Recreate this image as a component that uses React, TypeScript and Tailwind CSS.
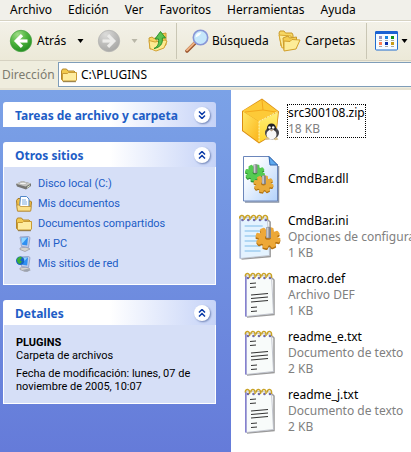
import type { ReactNode } from 'react';

const menus = ['Archivo', 'Edición', 'Ver', 'Favoritos', 'Herramientas', 'Ayuda'];

function Caret({ muted = false }: { muted?: boolean }) {
  return (
    <svg width="7" height="4" viewBox="0 0 7 4" className="shrink-0" aria-hidden="true">
      <path d="M0.5 0h6L3.5 4z" fill={muted ? '#b9b7a8' : '#000'} />
    </svg>
  );
}

function RoundArrow({ forward = false }: { forward?: boolean }) {
  const id = forward ? 'roundGrey' : 'roundGreen';
  return (
    <svg width="24" height="24" viewBox="0 0 24 24" className="shrink-0" aria-hidden="true">
      <defs>
        <radialGradient id={id} cx="0.35" cy="0.2" r="0.85">
          <stop offset="0" stopColor={forward ? '#dcdcda' : '#9fdc86'} />
          <stop offset="0.5" stopColor={forward ? '#bfbfbd' : '#4fb53f'} />
          <stop offset="1" stopColor={forward ? '#a6a6a4' : '#1e8a1f'} />
        </radialGradient>
      </defs>
      <circle cx="12" cy="12" r="10.7" fill={`url(#${id})`} stroke={forward ? '#b5b5b2' : '#4ba345'} strokeWidth="0.8" />
      <g transform={forward ? 'translate(24 0) scale(-1 1)' : undefined} fill="none" stroke={forward ? '#ececea' : '#fff'} strokeWidth="3.200">
        <path d="M13 6.200L7.200 12l5.800 5.800" />
        <path d="M7.500 12H18.500" />
      </g>
    </svg>
  );
}

function UpFolder() {
  return (
    <svg width="20" height="22" viewBox="0 0 20 22" className="shrink-0" aria-hidden="true">
      <path d="M1 8l3-1 2 1.500 3-1V17l-7 2z" fill="#f7d662" stroke="#c99b2e" />
      <path d="M13 4l5-1v12l-6 4z" fill="#f5cf55" stroke="#c89830" />
      <path d="M1 10.500l6 1.500L17 10l2 1-3 7-8 3-6-2.500z" fill="#fdea91" stroke="#d2a233" />
      <path d="M6 18.500c4-2 5-5 4.500-9.500H7L12.500 1.500 17.500 8h-3.200c.7 6-2.300 9.500-8.300 10.500z" fill="#5bc152" stroke="#1f8a26" strokeWidth="0.900" />
    </svg>
  );
}

function Magnifier() {
  return (
    <svg width="24" height="24" viewBox="0 0 24 24" className="shrink-0" aria-hidden="true">
      <path d="M2 22l8.500-8.500" stroke="#99512a" strokeWidth="3.500" strokeLinecap="round" />
      <path d="M2 21.300l8-8" stroke="#efb284" strokeWidth="2" strokeLinecap="round" />
      <circle cx="15.500" cy="8.500" r="7.200" fill="#c5e7fb" stroke="#8896d6" strokeWidth="1.600" />
      <path d="M10.500 8.500a5 5 0 016-5c-1 2-3 4-6 5z" fill="#fff" opacity="0.9" />
    </svg>
  );
}

function Folders() {
  return (
    <svg width="23" height="22" viewBox="0 0 23 22" className="shrink-0" aria-hidden="true">
      <path d="M1 3l1-2 4 0 1.500 2H14l1 2v9L3 16z" fill="#f7d763" stroke="#c99a2b" />
      <path d="M1 5l12 1 2 9-11 3z" fill="#fdec9c" stroke="#d9a930" />
      <path d="M5 8l5-2 1.500 2 7-1v11L6 20z" fill="#f4cd50" stroke="#c99a2b" />
      <path d="M6 11l6 .5 2-2 8 .5-4 9-12 2z" fill="#fdec98" stroke="#d2a02a" />
    </svg>
  );
}

function ViewsIcon() {
  const dots: [number, number, string][] = [
    [4, 5, '#9693c6'], [10, 5, '#1683e4'], [16, 5, '#109318'],
    [4, 11, '#ff7c50'], [10, 11, '#0a2faa'], [16, 11, '#c89c16'],
  ];
  return (
    <svg width="23" height="20" viewBox="0 0 23 20" className="shrink-0" aria-hidden="true">
      <rect x="0.500" y="0.500" width="22" height="18.500" rx="1" fill="#f6fbff" stroke="#1e6cd0" />
      <path d="M1 0h21l1 1v2H0V1z" fill="#1b62d2" />
      {dots.map(([x, y, c]) => (
        <g key={`${x}-${y}`}>
          <rect x={x} y={y} width="3" height="3" fill={c} />
          <rect x={x} y={y + 4} width="3" height="1" fill="#a7a7a7" />
        </g>
      ))}
    </svg>
  );
}

function Folder() {
  return (
    <svg width="16" height="16" viewBox="0 0 16 16" className="shrink-0" aria-hidden="true">
      <path d="M.5 4l1-2h4L7 4h6l1 1v8.500H1.500l-1-1z" fill="#f2ca4f" stroke="#b5882c" />
      <path d="M1.500 6.500h5l1-1h8v7.500l-1 1h-13z" fill="#feec9f" stroke="#c99b35" />
      <path d="M2 14.700h13" stroke="#7a5d20" strokeWidth="0.800" />
    </svg>
  );
}

function Disk() {
  return (
    <svg width="16" height="16" viewBox="0 0 16 16" className="shrink-0" aria-hidden="true">
      <path d="M0 8l6-3 9 2.500v2.500l-5 3.500L1 10.500z" fill="#757573" />
      <path d="M0 7.700L6 5l9 2.500-5.500 3z" fill="#c6c6c2" />
      <ellipse cx="7" cy="7.500" rx="3.200" ry="1.300" fill="#f2f2f0" stroke="#999" strokeWidth="0.500" />
      <path d="M11 11.500l3-2" stroke="#d9e6c9" />
    </svg>
  );
}

function Documents() {
  return (
    <svg width="16" height="16" viewBox="0 0 16 16" className="shrink-0" aria-hidden="true">
      <path d="M.5 4.500L2 2.500h3V5h9.500l1 1-1 9h-13z" fill="#f1bf45" stroke="#a77a24" />
      <path d="M4.500.5h6L13 3v9H3.500z" fill="#fff" stroke="#4f86c9" />
      <path d="M6 4h4M6 6h5M6 8h5" stroke="#7daade" />
      <path d="M.8 9h2.500l1 1.500H15.200l-.5 4.500H1.500z" fill="#fbe089" stroke="#bf9032" strokeWidth="0.800" />
    </svg>
  );
}

function Computer({ globe = false }: { globe?: boolean }) {
  return (
    <svg width="16" height="16" viewBox="0 0 16 16" className="shrink-0" aria-hidden="true">
      <path d="M4 12l6-1 4 2-5 2.500-5-2z" fill="#d5d3ce" stroke="#8c8b92" strokeWidth="0.600" />
      <path d="M4 1l8.500-.5L14 1.500 12.500 11.500 5.500 10.500z" fill="#c3cde6" stroke="#8294bd" strokeWidth="0.700" />
      <path d="M5 1.800l7-.3-.8 8-5-.7z" fill="#2f90f2" />
      <path d="M5.300 2l6-.2-5 5.700z" fill="#8fd5ff" />
      {globe && (
        <g>
          <circle cx="4.200" cy="4.700" r="4.200" fill="#1763c4" />
          <path d="M1 3c2-3 4-2.500 5-1.500l-2 3 2 1-2 2.500C2 8 .5 5 1 3z" fill="#3caf36" />
          <path d="M6 14l5-1 4 1-4 2z" fill="#9ca2ae" />
        </g>
      )}
    </svg>
  );
}

function ZipIcon() {
  return (
    <svg width="42" height="48" viewBox="0 0 42 48" aria-hidden="true">
      <defs>
        <linearGradient id="boxLeft" x1="0" y1="0" x2="1" y2="1">
          <stop offset="0" stopColor="#ffe766" />
          <stop offset="1" stopColor="#fbb418" />
        </linearGradient>
        <linearGradient id="boxRight" x1="0" y1="0" x2="0" y2="1">
          <stop offset="0" stopColor="#fff07a" />
          <stop offset="1" stopColor="#ffd42a" />
        </linearGradient>
      </defs>
      <path d="M3 14L23 1.500 40 14.500 37.500 36 20 46.500 3 34z" fill="#d98c12" />
      <path d="M3.500 14L23 2.500 39 14.500 20 24.500z" fill="#fdca38" />
      <path d="M4 14.500l16 10V45.500L4 33.500z" fill="url(#boxLeft)" />
      <path d="M39 15L20 24.500V45.500l17-10z" fill="url(#boxRight)" />
      <path d="M23 3l1 10-18 2M24 13l13 2" fill="none" stroke="#f3a91c" />
      <path d="M20 24.500L39 14.500M20 24.500V45" stroke="#fff7bc" strokeDasharray="2 1" />
      <ellipse cx="33" cy="36" rx="7" ry="6.500" fill="#45454a" />
      <circle cx="32.500" cy="31" r="4.500" fill="#222226" />
      <ellipse cx="32.500" cy="37.500" rx="5" ry="5" fill="#f7f7f7" />
      <circle cx="30.500" cy="30.500" r="1.300" fill="#fff" />
      <circle cx="34.200" cy="30.500" r="1.300" fill="#fff" />
      <path d="M30 32.500h5l-2.500 2z" fill="#b9a48c" />
      <path d="M26 41.500l3-1.500 2 2.500-4 .5zM34.500 42.500l3-2.500 2 2.500-3 .8z" fill="#d8c08a" />
    </svg>
  );
}

function Gear({ x, y, scale, fill, edge }: { x: number; y: number; scale: number; fill: string; edge: string }) {
  const teeth = [0, 45, 90, 135, 180, 225, 270, 315];
  return (
    <g transform={`translate(${x} ${y}) scale(${scale} ${scale * 0.85})`}>
      {[edge, fill].map((c, i) => (
        <g key={c} transform={i ? 'translate(0 -1)' : 'translate(0 1)'} fill={c}>
          {teeth.map((a) => (
            <rect key={a} x="-2.800" y="-12.500" width="5.600" height="7" rx="1.500" transform={`rotate(${a + 15})`} />
          ))}
          <circle r="9.500" />
        </g>
      ))}
      <ellipse cy="-1" rx="3" ry="2.500" fill={edge} />
      <path d="M-2-13q2.500-1.500 5 0V-1q-2.500 1.500-5 0z" fill="#85868c" />
      <path d="M-1.500-13h2v12h-2z" fill="#c9cacf" />
    </g>
  );
}

function DllIcon() {
  return (
    <svg width="42" height="48" viewBox="0 0 42 48" aria-hidden="true">
      <defs>
        <linearGradient id="dllPage" x1="0" y1="0" x2="1" y2="1">
          <stop offset="0.2" stopColor="#fff" />
          <stop offset="1" stopColor="#b3d2fb" />
        </linearGradient>
      </defs>
      <path d="M6 47h33.500V11" fill="none" stroke="#8b95a6" strokeWidth="1.500" />
      <path d="M4.500 1.500H30l8.500 8.500v36h-34z" fill="url(#dllPage)" stroke="#6b86bb" />
      <path d="M30 1.500l1 8.500h7.500z" fill="#5eaaf0" stroke="#2e64ad" />
      <Gear x={16} y={18.5} scale={0.8} fill="#55cb52" edge="#2b9232" />
      <Gear x={24.5} y={29.5} scale={0.8} fill="#e9ab3a" edge="#b3730f" />
    </svg>
  );
}

function NotebookIcon({ gear = false }: { gear?: boolean }) {
  return (
    <svg width="42" height="48" viewBox="0 0 42 48" aria-hidden="true">
      <g transform={gear ? 'translate(-6 0) scale(1.060 1)' : undefined}>
        <path d="M8 46l27-2.500V9l-2-2" fill="none" stroke="#9a9a9a" strokeWidth="1.500" />
        <path d="M7 4l25.500 1 2 37.500L7 45.500z" fill={gear ? '#e4f3ff' : '#f8fbfa'} stroke="#b5b9c4" strokeWidth="0.800" />
        <path d="M6.800 5v40.500" stroke={gear ? '#aebfdc' : '#8581cf'} strokeWidth="1.600" />
        {gear ? (
          <path d="M11 13h17M11 18h16M11 23h12M11 28h12M11 33h15M11 38h15" stroke="#7dbbea" />
        ) : (
          <g stroke="#333">
            <path d="M11 12.500l6-.5M11 16.500l6-.5M12 36.500l6-.5M12 40.500l6-.5" />
            <path d="M12 24l17-1.500M12 27.500l17-1.500M12 31l17-1.500" strokeWidth="1.200" />
          </g>
        )}
        {[9, 14.5, 20, 25.5, 31].map((x) => (
          <g key={x}>
            <circle cx={x} cy="7" r="1.300" fill="#6f6aa8" />
            <path d={`M${x - 2.5} 5.500c-1-3.500 4-4 4-.8v2.300`} fill="none" stroke="#c9a225" strokeWidth="1.500" />
          </g>
        ))}
      </g>
      {gear && <Gear x={29} y={25.5} scale={1} fill="#eda838" edge="#b4700e" />}
    </svg>
  );
}

function Chevrons({ down = false }: { down?: boolean }) {
  return (
    <span className="flex size-4 items-center justify-center rounded-full bg-white shadow-[1px_1px_2px_#7286b8]">
      <svg width="8" height="8" viewBox="0 0 8 8" fill="none" stroke="#0b3ba8" strokeWidth="1.500" aria-hidden="true">
        {down ? <path d="M1 .5l3 3 3-3M1 4.500l3 3 3-3" /> : <path d="M1 3.500l3-3 3 3M1 7.500l3-3 3 3" />}
      </svg>
    </span>
  );
}

function Panel({ title, children }: { title: string; children?: ReactNode }) {
  return (
    <section>
      <button
        type="button"
        aria-expanded={!!children}
        className="flex h-[25px] w-full items-center justify-between rounded-t-[3px] bg-linear-to-r from-white from-50% to-[#c6d3f7] pr-1.5 pl-3 font-['Noto_Sans',sans-serif] text-[12px] font-bold text-[#215dc6]"
      >
        <span className="pt-0.5">{title}</span>
        <Chevrons down={!children} />
      </button>
      {children && <div className="border border-t-0 border-white bg-[#d6dff7]">{children}</div>}
    </section>
  );
}

const places: { name: string; icon: ReactNode }[] = [
  { name: 'Disco local (C:)', icon: <Disk /> },
  { name: 'Mis documentos', icon: <Documents /> },
  { name: 'Documentos compartidos', icon: <Folder /> },
  { name: 'Mi PC', icon: <Computer /> },
  { name: 'Mis sitios de red', icon: <Computer globe /> },
];

const files: { name: string; lines: string[]; icon: ReactNode; focused?: boolean }[] = [
  { name: 'src300108.zip', lines: ['18 KB'], icon: <ZipIcon />, focused: true },
  { name: 'CmdBar.dll', lines: [], icon: <DllIcon /> },
  { name: 'CmdBar.ini', lines: ['Opciones de configuración', '1 KB'], icon: <NotebookIcon gear /> },
  { name: 'macro.def', lines: ['Archivo DEF', '1 KB'], icon: <NotebookIcon /> },
  { name: 'readme_e.txt', lines: ['Documento de texto', '2 KB'], icon: <NotebookIcon /> },
  { name: 'readme_j.txt', lines: ['Documento de texto', '2 KB'], icon: <NotebookIcon /> },
];

export default function App() {
  return (
    <div className="flex min-h-screen flex-col overflow-hidden bg-[#efedde] font-['Noto_Sans',sans-serif] text-[12px] text-black">
      <nav className="flex h-[21px] items-center gap-4 border-b border-[#d6d2c2] bg-[#f1f0ea] pl-2.5">
        {menus.map((m) => (
          <button key={m} type="button">{m}</button>
        ))}
      </nav>

      <div className="flex h-10 items-center border-t border-b border-t-white border-b-[#d6d2c2] bg-linear-to-b from-[#f3f1e8] to-[#ece9d8] pl-[9px] whitespace-nowrap">
        <button type="button" className="flex w-[88px] items-center gap-1">
          <RoundArrow />
          <span className="w-9 text-left">Atrás</span>
          <Caret />
        </button>
        <button type="button" aria-label="Adelante" className="flex w-[51px] items-center gap-2.5">
          <RoundArrow forward />
          <Caret muted />
        </button>
        <button type="button" aria-label="Arriba"><UpFolder /></button>
        <span className="mx-2 h-9 w-px shrink-0 bg-[#c9c6b4]" />
        <button type="button" className="flex w-[93px] shrink-0 items-center gap-[3px]">
          <Magnifier />
          Búsqueda
        </button>
        <button type="button" className="flex w-[88px] shrink-0 items-center gap-1">
          <Folders />
          Carpetas
        </button>
        <span className="mr-2 h-9 w-px shrink-0 bg-[#c9c6b4]" />
        <button type="button" aria-label="Vistas" className="flex shrink-0 items-center gap-[3px]">
          <ViewsIcon />
          <Caret />
        </button>
      </div>

      <div className="flex h-[29px] items-center border-b-2 border-[#e6e2d2]">
        <label htmlFor="address" className="w-[58px] shrink-0 pl-0.5 text-[#7d7b70]">Dirección</label>
        <div className="flex h-[25px] flex-1 items-center gap-1 border border-r-0 border-[#7f9db9] bg-white pl-0.5">
          <Folder />
          <input id="address" defaultValue="C:\PLUGINS" className="min-w-0 flex-1 bg-transparent outline-none" />
        </div>
      </div>

      <main className="flex flex-1">
        <aside className="flex w-[231px] shrink-0 flex-col gap-[15px] bg-linear-to-b from-[#7ba2e7] to-[#657bd9] pt-3 pr-[15px] pl-[3px] font-[Roboto,sans-serif] text-[11px]">
          <Panel title="Tareas de archivo y carpeta" />
          <Panel title="Otros sitios">
            <ul className="flex flex-col gap-1 pt-[9px] pb-3 pl-3">
              {places.map((p) => (
                <li key={p.name}>
                  <a href="#" className="flex h-4 items-center gap-1.5 text-[#215dc6]">
                    {p.icon}
                    {p.name}
                  </a>
                </li>
              ))}
            </ul>
          </Panel>
          <Panel title="Detalles">
            <div className="pt-[11px] pr-2 pb-2.5 pl-3 leading-[13px]">
              <p className="font-bold">PLUGINS</p>
              <p>Carpeta de archivos</p>
              <p className="mt-[5px]">Fecha de modificación: lunes, 07 de noviembre de 2005, 10:07</p>
            </div>
          </Panel>
        </aside>

        <ul className="min-w-0 flex-1 overflow-hidden bg-white pt-0.5 pl-2">
          {files.map((f) => (
            <li key={f.name} className="flex h-[58px] items-center gap-1.5 leading-4 whitespace-nowrap">
              <div className="w-[42px] shrink-0">{f.icon}</div>
              <div className={f.focused ? 'border border-dotted border-black' : 'border border-transparent'}>
                <p>{f.name}</p>
                {f.lines.map((l) => (
                  <p key={l} className="text-[#808080]">{l}</p>
                ))}
              </div>
            </li>
          ))}
        </ul>
      </main>
    </div>
  );
}
